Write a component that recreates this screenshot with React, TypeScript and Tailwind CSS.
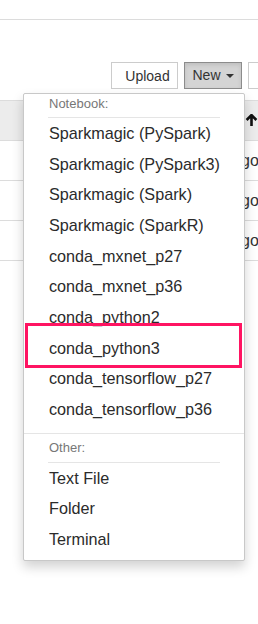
const notebookKernels = [
  "Sparkmagic (PySpark)",
  "Sparkmagic (PySpark3)",
  "Sparkmagic (Spark)",
  "Sparkmagic (SparkR)",
  "conda_mxnet_p27",
  "conda_mxnet_p36",
  "conda_python2",
  "conda_python3",
  "conda_tensorflow_p27",
  "conda_tensorflow_p36",
];

const otherItems = ["Text File", "Folder", "Terminal"];

function NewMenu() {
  return (
    <div className="absolute left-[23px] top-[93px] w-[222px] bg-white border border-[#c8c8c8] rounded-[2px] shadow-[0_6px_12px_rgba(0,0,0,0.18)] pb-[5px]">
      <div className="h-[23px] px-[25px] text-[13px] leading-[20px] text-[#777]">Notebook:</div>
      <div className="mx-[24px] h-px bg-[#e5e5e5]" />
      {notebookKernels.map((name) => (
        <div key={name} className="h-[30.67px] flex items-center px-[25px] text-[16.2px] text-[#2b2b2b] whitespace-nowrap">
          {name}
        </div>
      ))}
      <div className="mt-[8px] h-px bg-[#e5e5e5]" />
      <div className="h-[28px] flex items-center px-[25px] text-[13px] text-[#777]">Other:</div>
      <div className="mx-[24px] h-px bg-[#e5e5e5]" />
      {otherItems.map((name) => (
        <div key={name} className="h-[30.67px] flex items-center px-[25px] text-[16.2px] text-[#2b2b2b]">
          {name}
        </div>
      ))}
    </div>
  );
}

export default function App() {
  return (
    <div
      className="relative w-[258px] h-[624px] overflow-hidden bg-white text-[#333]"
      style={{ fontFamily: '"Liberation Sans", Arial, sans-serif' }}
    >
      <div className="h-[20px] border-b border-[#dcdcdc]" />

      <div className="flex justify-end items-start gap-[6px] mt-[42px] h-[28px]">
        <button className="w-[67px] h-[27px] border border-[#ccc] bg-white text-[14px] text-[#333] pt-[2px] pl-[6px]">
          Upload
        </button>
        <button className="w-[58px] h-[27px] border border-[#8c8c8c] bg-[#d4d4d4] text-[14px] text-[#333] flex items-center justify-center gap-[5px] shadow-[inset_0_2px_4px_rgba(0,0,0,0.1)]">
          New
          <span className="w-0 h-0 border-l-[4px] border-r-[4px] border-t-[4px] border-l-transparent border-r-transparent border-t-[#333]" />
        </button>
        <div className="w-[12px] h-[27px] border border-r-0 border-[#ccc] bg-white -mr-[2px]" />
      </div>

      <div className="mt-[10px]">
        <div className="h-[41px] bg-[#ececec] border-y border-[#dcdcdc] flex items-center justify-end pr-[1px]">
          <svg width="13" height="13" viewBox="0 0 12 12" className="mr-[-1px]">
            <path d="M6 1 L6 11 M1.5 5.5 L6 1 L10.5 5.5" stroke="#111" strokeWidth="2.4" fill="none" />
          </svg>
        </div>
        {[0, 1, 2].map((i) => (
          <div key={i} className="h-[40px] border-b border-[#dcdcdc] flex items-center pl-[241px] overflow-hidden">
            <span className="text-[16px] text-[#333]">go</span>
          </div>
        ))}
      </div>

      <NewMenu />

      <div className="absolute left-[25px] top-[323px] w-[217px] h-[45px] border-[3px] border-[#ff1462]" />
    </div>
  );
}
